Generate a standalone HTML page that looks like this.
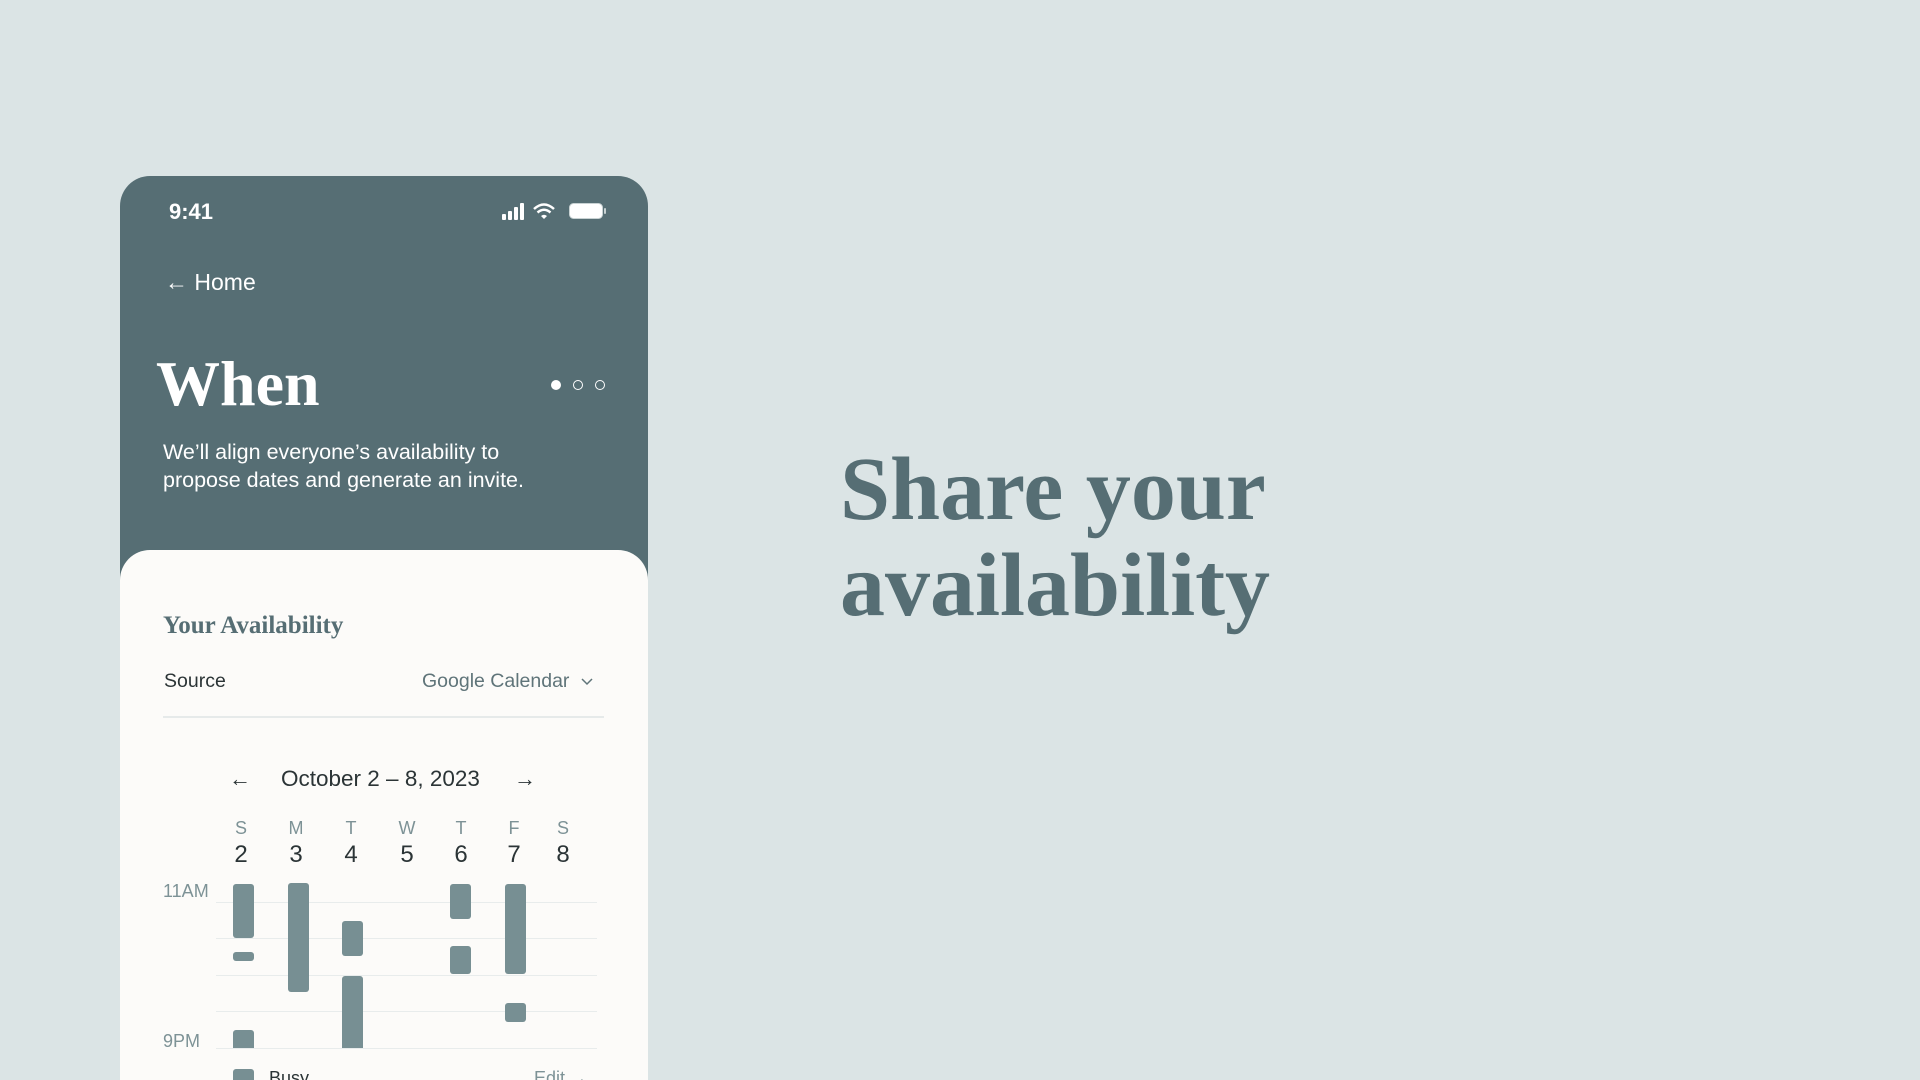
<!DOCTYPE html>
<html style="width:1920px;height:1080px;overflow:hidden"><head><meta charset="utf-8"><style>
*{margin:0;padding:0;box-sizing:border-box}
body{width:1920px;height:1080px;background:#dbe4e5;position:relative;overflow:hidden;font-family:"Liberation Sans",sans-serif}
.abs{position:absolute}
.card{left:120px;top:176px;width:528px;height:904px;background:#566e74;border-radius:30px 30px 0 0;overflow:hidden}
.panel{left:120px;top:550px;width:528px;height:530px;background:#fcfbf9;border-radius:30px 30px 0 0}
.serif{font-family:"Liberation Serif",serif;font-weight:bold}
.bar{position:absolute;background:#778f93;border-radius:3px;width:21px}
.grid{position:absolute;left:216px;width:381px;height:1px;background:#e8ecec}
.dl{position:absolute;width:40px;text-align:center;font-size:18px;color:#7d9296;top:818px}
.dn{position:absolute;width:40px;text-align:center;font-size:24px;color:#2b3436;top:841px}
</style></head><body>
<div class="abs card"></div>
<div class="abs" style="left:169px;top:199px;color:#fff;font-size:22px;font-weight:bold">9:41</div>
<svg class="abs" style="left:500px;top:200px" width="110" height="24" viewBox="0 0 110 24">
<rect x="2" y="14" width="4" height="6" rx="1" fill="#fff"/><rect x="8" y="11" width="4" height="9" rx="1" fill="#fff"/><rect x="14" y="7" width="4" height="13" rx="1" fill="#fff"/><rect x="20" y="3" width="4" height="17" rx="1" fill="#fff"/>
<path d="M34 9 Q44 0 54 9" stroke="#fff" stroke-width="2.5" fill="none"/><path d="M37.5 12.5 Q44 7 50.5 12.5" stroke="#fff" stroke-width="2.5" fill="none"/><path d="M41 16 L44 19 L47 16 Q44 13.5 41 16Z" fill="#fff"/>
<rect x="69.5" y="3.5" width="33" height="15" rx="4" fill="#fff" stroke="#c8d2d3"/><rect x="104" y="8" width="2" height="6" rx="1" fill="#c8d2d3"/>
</svg>
<div class="abs" style="left:165px;top:269px;color:#fff;font-size:23px">&larr; Home</div>
<div class="abs serif" style="left:156px;top:344px;color:#fff;font-size:64px;line-height:80px">When</div>
<div class="abs" style="left:551px;top:380px;width:10px;height:10px;border-radius:50%;background:#fff"></div>
<div class="abs" style="left:573px;top:380px;width:10px;height:10px;border-radius:50%;border:1.5px solid #fff"></div>
<div class="abs" style="left:595px;top:380px;width:10px;height:10px;border-radius:50%;border:1.5px solid #fff"></div>
<div class="abs" style="left:163px;top:438px;color:#fff;font-size:21.5px;line-height:28px">We’ll align everyone’s availability to<br>propose dates and generate an invite.</div>
<div class="abs panel"></div>
<div class="abs serif" style="left:163px;top:612px;color:#566e74;font-size:25px">Your Availability</div>
<div class="abs" style="left:164px;top:670px;color:#2b3436;font-size:19.5px">Source</div>
<div class="abs" style="left:422px;top:670px;color:#5f7479;font-size:19.5px">Google Calendar</div>
<svg class="abs" style="left:580px;top:675px" width="14" height="14"><path d="M2 4 L7 9 L12 4" stroke="#5f7479" stroke-width="1.5" fill="none"/></svg>
<div class="abs" style="left:163px;top:716px;width:441px;height:2px;background:#e6eaea"></div>
<div class="abs" style="left:229px;top:766px;color:#2b3436;font-size:22px">&larr;</div>
<div class="abs" style="left:281px;top:766px;color:#2b3436;font-size:22.5px">October 2 – 8, 2023</div>
<div class="abs" style="left:514px;top:766px;color:#2b3436;font-size:22px">&rarr;</div>
<div class="dl" style="left:221px">S</div><div class="dl" style="left:276px">M</div><div class="dl" style="left:331px">T</div><div class="dl" style="left:387px">W</div><div class="dl" style="left:441px">T</div><div class="dl" style="left:494px">F</div><div class="dl" style="left:543px">S</div>
<div class="dn" style="left:221px">2</div><div class="dn" style="left:276px">3</div><div class="dn" style="left:331px">4</div><div class="dn" style="left:387px">5</div><div class="dn" style="left:441px">6</div><div class="dn" style="left:494px">7</div><div class="dn" style="left:543px">8</div>
<div class="abs" style="left:163px;top:881px;color:#7d9296;font-size:18px">11AM</div>
<div class="abs" style="left:163px;top:1031px;color:#7d9296;font-size:18px">9PM</div>
<div class="grid" style="top:902px"></div><div class="grid" style="top:938px"></div><div class="grid" style="top:975px"></div><div class="grid" style="top:1011px"></div><div class="grid" style="top:1048px"></div>
<div class="bar" style="left:233px;top:884px;height:54px"></div>
<div class="bar" style="left:233px;top:952px;height:9px"></div>
<div class="bar" style="left:233px;top:1030px;height:18px;border-radius:3px 3px 0 0"></div>
<div class="bar" style="left:288px;top:883px;height:109px"></div>
<div class="bar" style="left:342px;top:921px;height:35px"></div>
<div class="bar" style="left:342px;top:976px;height:72px;border-radius:3px 3px 0 0"></div>
<div class="bar" style="left:450px;top:884px;height:35px"></div>
<div class="bar" style="left:450px;top:946px;height:28px"></div>
<div class="bar" style="left:505px;top:884px;height:90px"></div>
<div class="bar" style="left:505px;top:1003px;height:19px"></div>
<div class="bar" style="left:233px;top:1069px;height:20px"></div>
<div class="abs" style="left:269px;top:1068px;color:#2b3436;font-size:18px">Busy</div>
<div class="abs" style="left:534px;top:1068px;color:#7d9296;font-size:18px">Edit &rarr;</div>
<div class="abs serif" style="left:840px;top:442px;color:#566e74;font-size:90px;line-height:96px">Share your<br>availability</div>
</body></html>
